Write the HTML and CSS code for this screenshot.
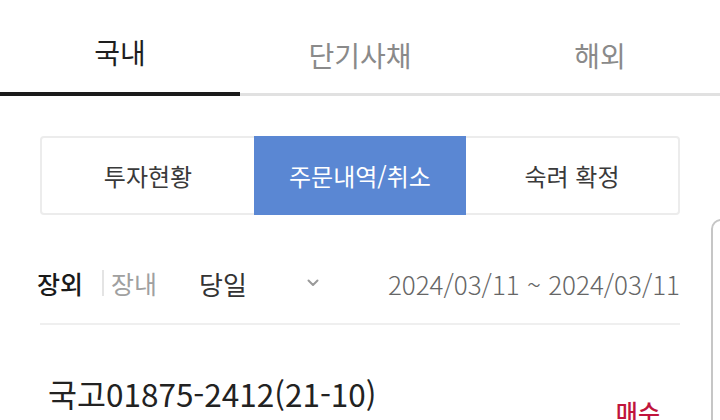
FILE: index.html
```html
<!DOCTYPE html>
<html lang="ko">
<head>
<meta charset="utf-8">
<link rel="stylesheet" href="styles.css">
</head>
<body>
<div class="screen">
  <nav class="tabs">
    <div class="tab active">국내</div>
    <div class="tab">단기사채</div>
    <div class="tab">해외</div>
  </nav>
  <main class="content">
    <div class="segment">
      <div class="seg">투자현황</div>
      <div class="seg on">주문내역/취소</div>
      <div class="seg">숙려 확정</div>
    </div>
    <div class="filter">
      <div class="market">
        <span class="mk on">장외</span>
        <span class="sep"></span>
        <span class="mk">장내</span>
      </div>
      <div class="period">
        <span>당일</span>
        <svg class="chev" width="12" height="8" viewBox="0 0 12 8"><path d="M1.5 1.5 L6 6 L10.5 1.5" fill="none" stroke="#9a9a9a" stroke-width="2" stroke-linecap="round" stroke-linejoin="round"/></svg>
      </div>
      <div class="dates">2024/03/11 ~ 2024/03/11</div>
    </div>
    <div class="divider"></div>
    <div class="item">
      <div class="name">국고01875-2412(21-10)</div>
      <div class="side">매수</div>
    </div>
  </main>
  <div class="edge"></div>
</div>
</body>
</html>
```
FILE: styles.css
```css
html, body {
  margin: 0;
  padding: 0;
  background: #fff;
}
body {
  font-family: "Noto Sans CJK KR", "Noto Sans", sans-serif;
  color: #222;
}
.screen {
  position: relative;
  width: 720px;
  height: 420px;
  overflow: hidden;
}
.tabs {
  display: flex;
  align-items: flex-end;
}
.tab {
  flex: 1;
  height: 93px;
  box-sizing: border-box;
  padding-top: 33px;
  text-align: center;
  font-size: 28px;
  line-height: 38px;
  color: #8a8a8a;
  border-bottom: 3px solid #e1e1e1;
}
.tab.active {
  height: 96px;
  color: #1e1e1e;
  border-bottom: 4px solid #1b1b1b;
}
.content {
  padding: 40px 40px 0;
}
.segment {
  display: flex;
  height: 79px;
  box-sizing: border-box;
  border: 2px solid #ececec;
  border-radius: 4px;
}
.seg {
  flex: 1;
  display: flex;
  align-items: center;
  justify-content: center;
  font-size: 24px;
  color: #3a3a3a;
}
.seg.on {
  background: #5a87d3;
  color: #fff;
  margin: -2px 0;
}
.filter {
  display: flex;
  align-items: center;
  height: 56px;
  margin-top: 40px;
}
.market {
  display: flex;
  align-items: center;
  margin-left: -3px;
}
.mk {
  font-size: 25px;
  color: #a0a0a0;
}
.mk.on {
  color: #1a1a1a;
  font-weight: 500;
}
.sep {
  width: 2px;
  height: 26px;
  background: #e4e4e4;
  margin: 0 7px 0 19px;
}
.period {
  display: flex;
  align-items: center;
  width: 120px;
  margin-left: 42px;
  font-size: 26px;
  color: #333;
}
.chev {
  margin-left: auto;
}
.dates {
  margin-left: auto;
  font-size: 26px;
  color: #666;
  font-weight: 300;
}
.divider {
  height: 2px;
  background: #efefef;
  margin-top: 12px;
}
.item {
  display: flex;
  justify-content: space-between;
  margin-top: 48px;
  padding: 0 20px 0 8px;
}
.name {
  font-size: 31.5px;
  line-height: 40px;
  color: #222;
}
.side {
  font-size: 24px;
  line-height: 30px;
  color: #c0143c;
  margin-top: 24px;
  font-weight: 500;
}
.edge {
  position: absolute;
  left: 711px;
  top: 219px;
  width: 40px;
  height: 300px;
  border: 2px solid #c6c6c6;
  border-radius: 10px;
}
```
